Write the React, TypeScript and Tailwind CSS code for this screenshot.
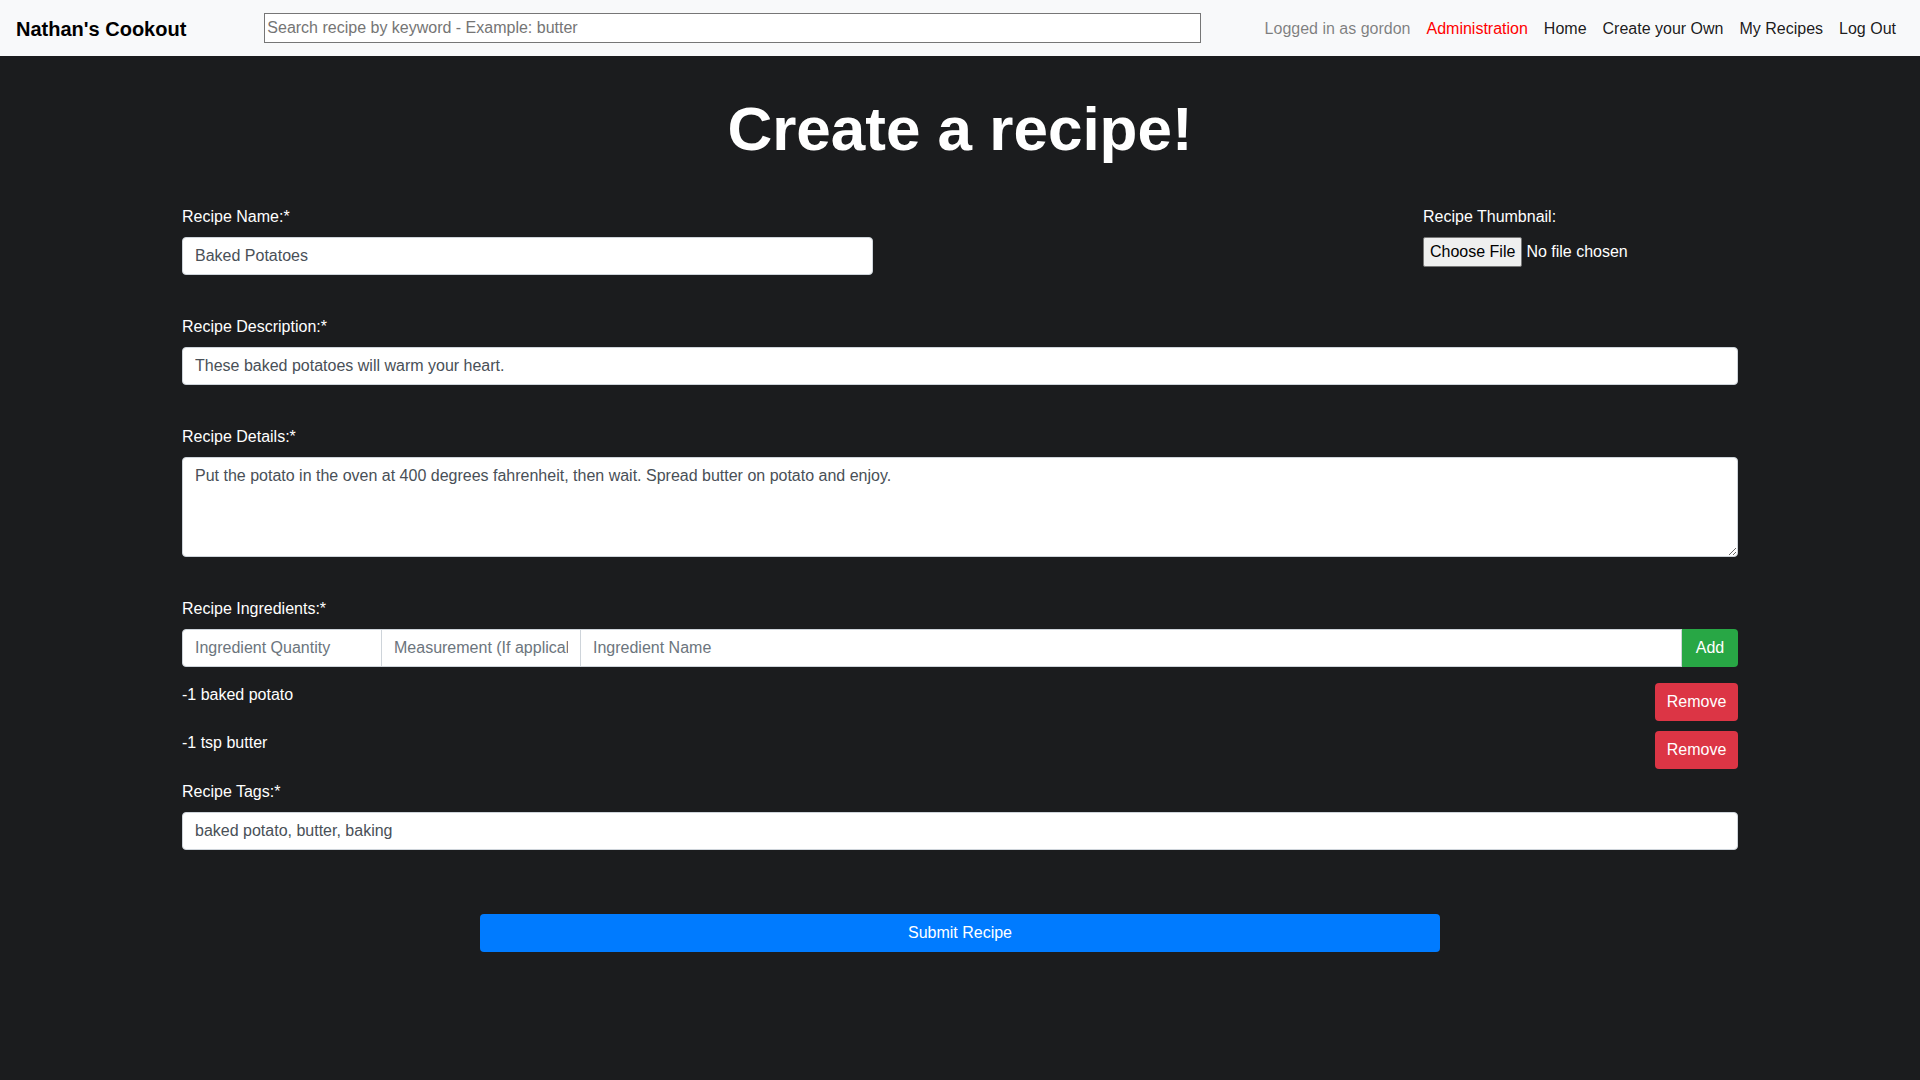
const font = 'font-["Segoe_UI","Liberation_Sans",Arial,sans-serif]';

const inputCls =
  'block h-[38px] w-full rounded border border-[#ced4da] bg-white px-3 text-base text-[#495057] placeholder:text-[#6c757d] outline-none';

function Navbar() {
  return (
    <nav className="flex h-14 items-center bg-[#f8f9fa] px-4">
      <span className="pt-0.5 text-xl font-bold text-black">Nathan's Cookout</span>
      <input
        className="ml-[78px] h-[30px] w-[937px] border border-[#767676] bg-white px-[2px] text-base text-black placeholder:text-[#757575] outline-none"
        placeholder="Search recipe by keyword - Example: butter"
      />
      <div className="ml-auto flex items-center pt-0.5 text-base">
        <span className="px-2 text-black/50">Logged in as gordon</span>
        <a className="px-2 text-[#ff0000]">Administration</a>
        <a className="px-2 text-black/90">Home</a>
        <a className="px-2 text-black/90">Create your Own</a>
        <a className="px-2 text-black/90">My Recipes</a>
        <a className="px-2 text-black/90">Log Out</a>
      </div>
    </nav>
  );
}

function Label({ children }: { children: string }) {
  return <label className="mb-2 block leading-6 text-white">{children}</label>;
}

function IngredientRow({ text }: { text: string }) {
  return (
    <div className="flex items-start justify-between">
      <span className="leading-6 text-white">{text}</span>
      <button className="h-[38px] w-[83px] rounded bg-[#dc3545] text-base text-white">Remove</button>
    </div>
  );
}

export default function App() {
  return (
    <div className={`min-h-screen bg-[#1b1c1e] ${font}`}>
      <Navbar />
      <main className="mx-auto w-[1556px] pb-24">
        <h1 className="mt-[36px] text-center text-[62px] font-bold leading-[1.2] text-white">Create a recipe!</h1>
        <form className="mt-[39px]" onSubmit={(e) => e.preventDefault()}>
          <div className="flex">
            <div className="w-[691px]">
              <Label>Recipe Name:*</Label>
              <input className={inputCls} defaultValue="Baked Potatoes" />
            </div>
            <div className="ml-auto w-[315px]">
              <Label>Recipe Thumbnail:</Label>
              <div className="flex items-center">
                <button
                  type="button"
                  className="h-[30px] rounded-[2px] border border-[#767676] bg-[#efefef] px-[6px] text-base text-black"
                >
                  Choose File
                </button>
                <span className="ml-1 text-base text-white">No file chosen</span>
              </div>
            </div>
          </div>

          <div className="mt-10">
            <Label>Recipe Description:*</Label>
            <input className={inputCls} defaultValue="These baked potatoes will warm your heart." />
          </div>

          <div className="mt-10">
            <Label>Recipe Details:*</Label>
            <textarea
              className="block h-[100px] w-full rounded border border-[#ced4da] bg-white px-3 py-[6px] text-base leading-6 text-[#495057] outline-none"
              defaultValue="Put the potato in the oven at 400 degrees fahrenheit, then wait. Spread butter on potato and enjoy."
            />
          </div>

          <div className="mt-10">
            <Label>Recipe Ingredients:*</Label>
            <div className="flex h-[38px]">
              <input
                className="h-full w-[200px] rounded-l border border-[#ced4da] bg-white px-3 text-base text-[#495057] placeholder:text-[#6c757d] outline-none"
                placeholder="Ingredient Quantity"
              />
              <input
                className="-ml-px h-full w-[200px] border border-[#ced4da] bg-white px-3 text-base text-[#495057] placeholder:text-[#6c757d] outline-none"
                placeholder="Measurement (If applicable)"
              />
              <input
                className="-ml-px h-full min-w-0 flex-1 border border-[#ced4da] bg-white px-3 text-base text-[#495057] placeholder:text-[#6c757d] outline-none"
                placeholder="Ingredient Name"
              />
              <button type="button" className="h-full w-[56px] rounded-r bg-[#28a745] text-base text-white">
                Add
              </button>
            </div>
            <div className="mt-4 flex flex-col gap-[10px]">
              <IngredientRow text="-1 baked potato" />
              <IngredientRow text="-1 tsp butter" />
            </div>
          </div>

          <div className="mt-[11px]">
            <Label>Recipe Tags:*</Label>
            <input className={inputCls} defaultValue="baked potato, butter, baking" />
          </div>

          <button
            type="submit"
            className="mx-auto mt-16 block h-[38px] w-[960px] rounded bg-[#007bff] text-base text-white"
          >
            Submit Recipe
          </button>
        </form>
      </main>
    </div>
  );
}
